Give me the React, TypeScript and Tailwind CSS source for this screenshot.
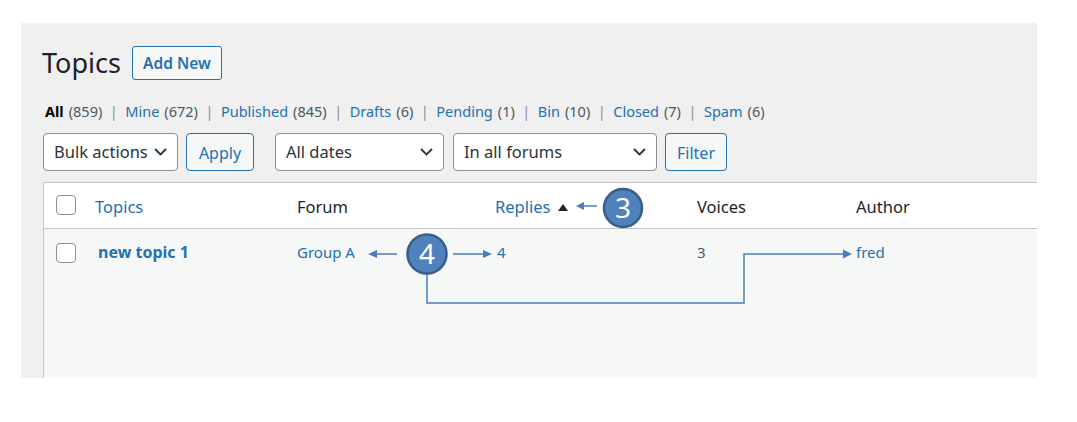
const font = { fontFamily: '"Noto Sans", "Open Sans", sans-serif' };

const views = [
  { label: "All", count: 859, current: true },
  { label: "Mine", count: 672 },
  { label: "Published", count: 845 },
  { label: "Drafts", count: 6 },
  { label: "Pending", count: 1 },
  { label: "Bin", count: 10 },
  { label: "Closed", count: 7 },
  { label: "Spam", count: 6 },
];

function Chevron() {
  return (
    <svg width={13} height={8} viewBox="0 0 13 8" className="shrink-0">
      <polyline points="1,1 6.5,6.5 12,1" fill="none" stroke="#2c3338" strokeWidth={1.8} />
    </svg>
  );
}

function Select({ label, width }: { label: string; width: string }) {
  return (
    <div
      className={`${width} h-[38px] flex items-center justify-between pl-[10px] pr-[10px] bg-white border border-[#8c8f94] rounded-[4px] text-[16.5px] text-[#2c3338]`}
    >
      <span>{label}</span>
      <Chevron />
    </div>
  );
}

function Button({ label, width }: { label: string; width: string }) {
  return (
    <button
      className={`${width} h-[38px] pt-[2px] bg-[#f6f7f7] border border-[#2271b1] rounded-[4px] text-[16px] text-[#2271b1]`}
    >
      {label}
    </button>
  );
}

function Checkbox() {
  return <div className="w-[20px] h-[20px] bg-white border border-[#8c8f94] rounded-[4px]" />;
}

function Annotations() {
  const c = "#4a7ebb";
  return (
    <svg className="absolute left-0 top-0 pointer-events-none" width={1077} height={422}>
      {/* 3 */}
      <line x1={597} y1={206} x2={582} y2={206} stroke={c} strokeWidth={1.5} />
      <polygon points="576,206 584,202 584,210" fill={c} />
      <circle cx={623} cy={208} r={19} fill="#4f81bd" stroke="#385d8a" strokeWidth={2.5} />
      <text x={623} y={218} textAnchor="middle" fill="#fff" fontSize={28} style={font}>
        3
      </text>
      {/* 4 */}
      <line x1={397} y1={254} x2={375} y2={254} stroke={c} strokeWidth={1.5} />
      <polygon points="368,254 377,250 377,258" fill={c} />
      <line x1={453} y1={254} x2={485} y2={254} stroke={c} strokeWidth={1.5} />
      <polygon points="492,254 483,250 483,258" fill={c} />
      <polyline
        points="427,274 427,303 744,303 744,254 845,254"
        fill="none"
        stroke={c}
        strokeWidth={1.5}
      />
      <polygon points="852,254 843,249.5 843,258.5" fill={c} />
      <circle cx={427} cy={254} r={19.5} fill="#4f81bd" stroke="#385d8a" strokeWidth={2.5} />
      <text x={427} y={264} textAnchor="middle" fill="#fff" fontSize={28} style={font}>
        4
      </text>
    </svg>
  );
}

export default function App() {
  return (
    <div className="relative w-[1077px] h-[422px] bg-white overflow-hidden" style={font}>
      <div className="ml-[21px] mt-[23px] w-[1016px] h-[355px] bg-[#f0f0f1] overflow-hidden pl-[22px] pt-[23px]">
        {/* title */}
        <div className="flex items-center h-[34px]">
          <h1 className="text-[27px] leading-none text-[#1d2327] -ml-[1px] -mt-[1px] mr-[11px]">Topics</h1>
          <button className="w-[90px] h-[34px] pt-[1px] bg-[#f6f7f7] border border-[#2271b1] rounded-[3px] text-[15.5px] font-semibold text-[#2271b1]">
            Add New
          </button>
        </div>

        {/* views */}
        <div className="mt-[22px] h-[20px] flex items-center text-[14.5px] text-[#50575e] pl-[2px] whitespace-nowrap">
          {views.map((v, i) => (
            <span key={v.label} className="flex items-center">
              {i > 0 && <span className="mx-[7.5px] text-[#8c8f94]">|</span>}
              <span className={v.current ? "font-bold text-black" : "text-[#2271b1]"}>{v.label}</span>
              <span className="ml-[5px]">({v.count})</span>
            </span>
          ))}
        </div>

        {/* filters */}
        <div className="mt-[11px] flex items-center">
          <Select label="Bulk actions" width="w-[135px]" />
          <div className="ml-[8px]">
            <Button label="Apply" width="w-[68px]" />
          </div>
          <div className="ml-[21px]">
            <Select label="All dates" width="w-[169px]" />
          </div>
          <div className="ml-[9px]">
            <Select label="In all forums" width="w-[204px]" />
          </div>
          <div className="ml-[8px]">
            <Button label="Filter" width="w-[62px]" />
          </div>
        </div>

        {/* table */}
        <div className="mt-[11px] w-[1100px] h-[220px] border border-[#c3c4c7] bg-[#f6f7f7]">
          <div className="h-[46px] bg-white border-b border-[#c3c4c7] grid grid-cols-[51px_202px_198px_202px_159px_1fr] items-center text-[16.5px] text-[#1d2327]">
            <div className="pl-[12px] -mt-[1px]">
              <Checkbox />
            </div>
            <div className="mt-[3px] text-[#2271b1]">Topics</div>
            <div className="mt-[3px]">Forum</div>
            <div className="mt-[3px] flex items-center text-[#2271b1]">
              Replies
              <span className="ml-[8px] w-0 h-0 border-l-[5px] border-r-[5px] border-b-[7px] border-l-transparent border-r-transparent border-b-[#1d2327]" />
            </div>
            <div className="mt-[3px]">Voices</div>
            <div className="mt-[3px]">Author</div>
          </div>
          <div className="pt-[12px] grid grid-cols-[51px_202px_198px_202px_159px_1fr] items-center text-[15px]">
            <div className="pl-[12px]">
              <Checkbox />
            </div>
            <div className="pl-[3px] -mt-[1px] font-bold text-[16px] text-[#2271b1]">new topic 1</div>
            <div className="-mt-[1px] text-[#2271b1]">Group A</div>
            <div className="-mt-[1px] pl-[2px] text-[#2271b1]">4</div>
            <div className="-mt-[1px] text-[#50575e]">3</div>
            <div className="-mt-[1px] text-[#2271b1]">fred</div>
          </div>
        </div>
      </div>
      <Annotations />
    </div>
  );
}
